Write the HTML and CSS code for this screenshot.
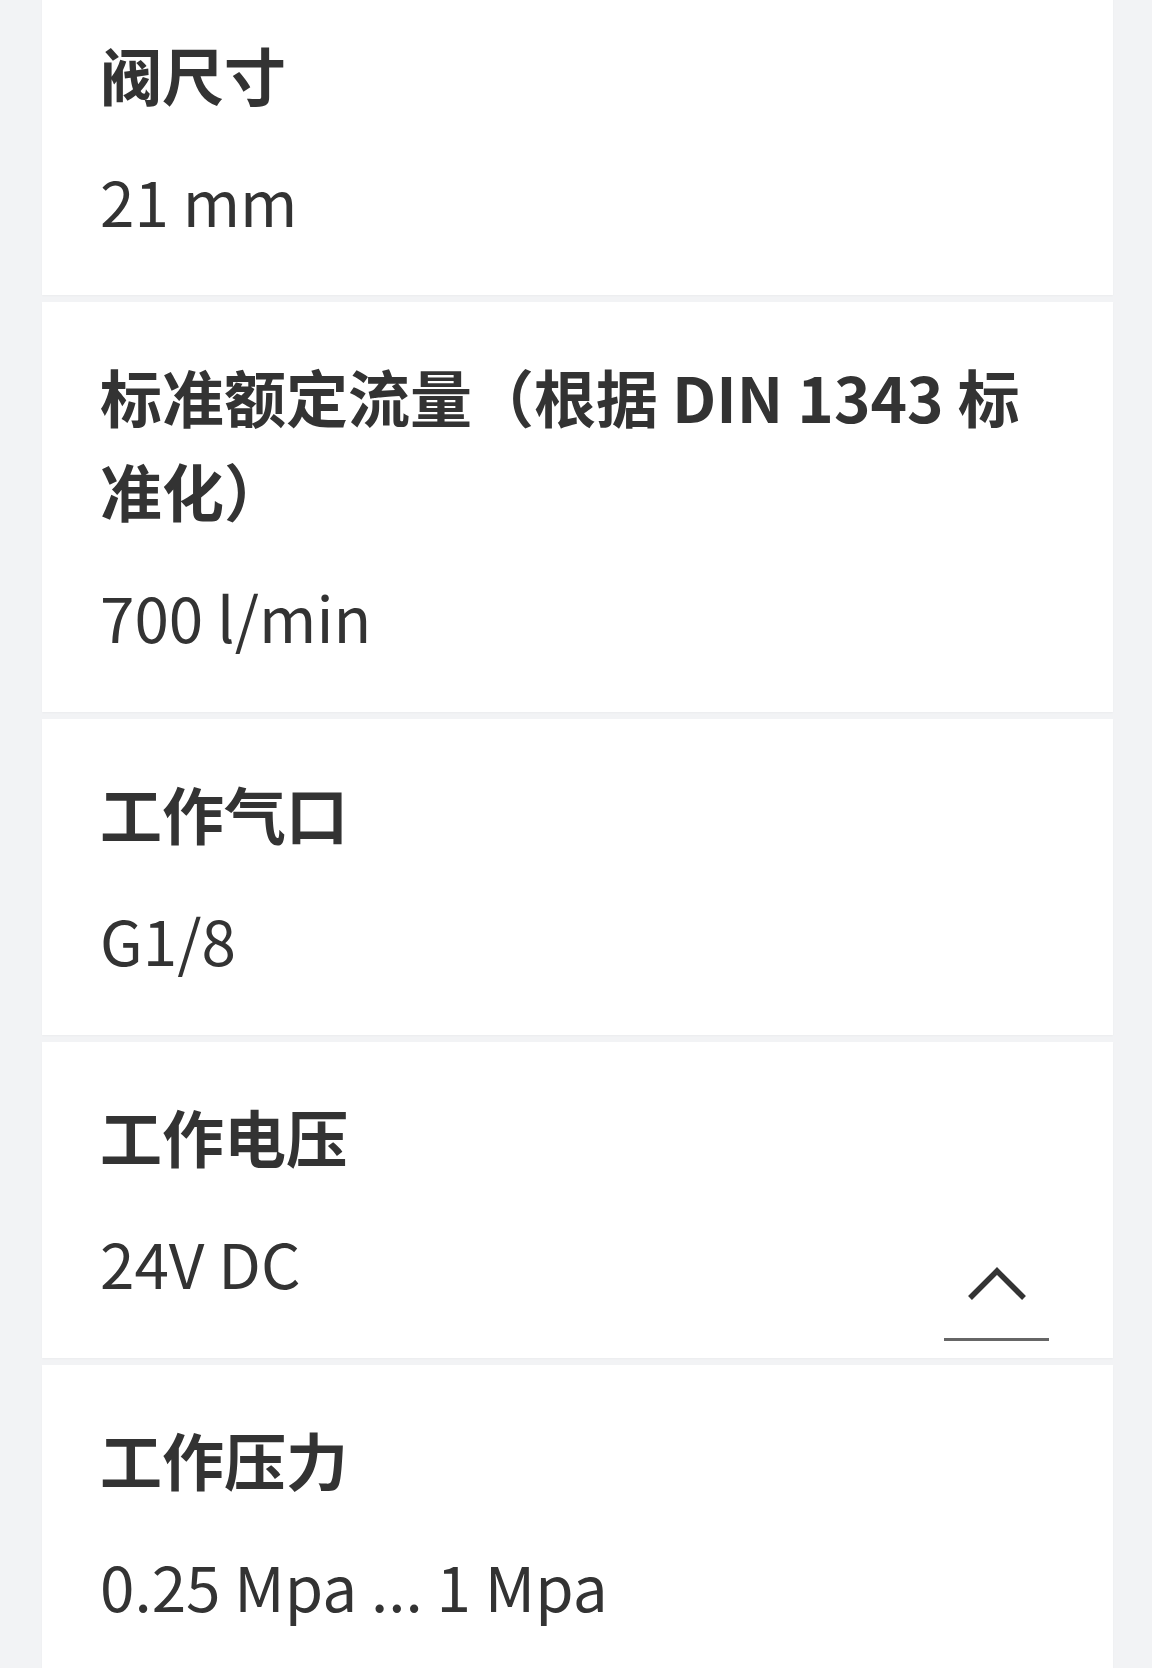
FILE: index.html
```html
<!DOCTYPE html>
<html lang="zh-CN">
<head>
  <meta charset="UTF-8">
  <meta name="viewport" content="width=device-width, initial-scale=1.0">
  <title>技术参数</title>
  <link rel="stylesheet" href="styles.css">
</head>
<body>
  <div class="spec-list">
    <div class="spec-card">
      <h2 class="spec-title">阀尺寸</h2>
      <p class="spec-value">21 mm</p>
    </div>
    <div class="spec-card">
      <h2 class="spec-title">标准额定流量（根据 DIN 1343 标准化）</h2>
      <p class="spec-value">700 l/min</p>
    </div>
    <div class="spec-card">
      <h2 class="spec-title">工作气口</h2>
      <p class="spec-value">G1/8</p>
    </div>
    <div class="spec-card">
      <h2 class="spec-title">工作电压</h2>
      <p class="spec-value">24V DC</p>
      <button class="to-top" aria-label="返回顶部">
        <svg width="60" height="36" viewBox="0 0 60 36">
          <path d="M3 32 L30 5 L57 32" fill="none" stroke="#333" stroke-width="5.5"/>
        </svg>
      </button>
    </div>
    <div class="spec-card">
      <h2 class="spec-title">工作压力</h2>
      <p class="spec-value">0.25 Mpa ... 1 Mpa</p>
    </div>
  </div>
</body>
</html>
```

FILE: styles.css
```css
body {
    margin: 0;
    padding: 0;
    background-color: #f2f3f5;
    font-family: "Noto Sans CJK SC", "Noto Sans", sans-serif;
    color: #333333;
}

.spec-list {
    width: 1071px;
    margin: -21px 0 0 42px;
    display: flex;
    flex-direction: column;
    gap: 7px;
}

.spec-card {
    position: relative;
    background-color: #ffffff;
    padding: 47px 58px 49px 58px;
    box-shadow: 0 1px 2px rgba(0, 0, 0, 0.03);
}

.spec-card:first-child {
    padding-top: 48px;
    padding-bottom: 48px;
}

.spec-title {
    margin: 0;
    font-size: 62px;
    line-height: 94px;
    font-weight: bold;
}

.spec-value {
    margin: 33px 0 0 0;
    font-size: 62px;
    line-height: 93px;
    font-weight: normal;
}

.to-top {
    position: absolute;
    right: 64px;
    bottom: 17px;
    width: 105px;
    height: 80px;
    padding: 0;
    background: none;
    border: none;
    border-bottom: 3px solid #666666;
    display: flex;
    align-items: flex-start;
    justify-content: center;
    cursor: pointer;
}

.to-top svg {
    margin-top: 5px;
}
```
